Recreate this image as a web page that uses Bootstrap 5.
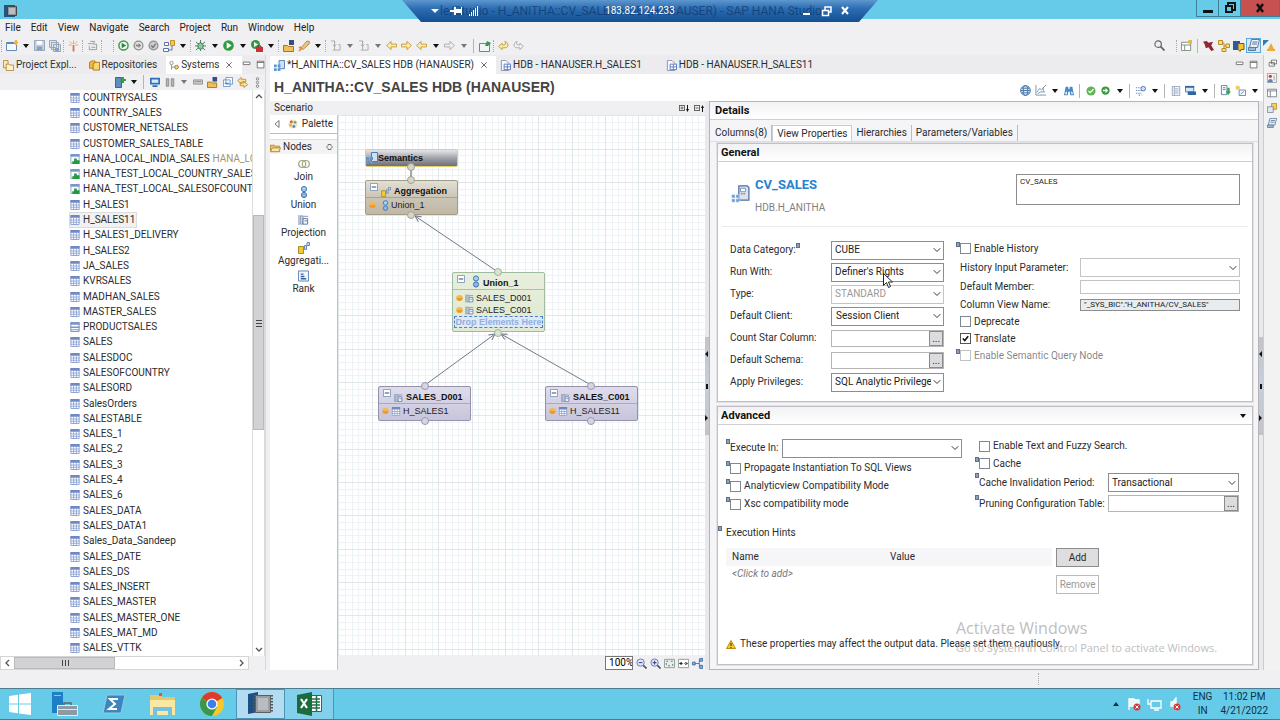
<!DOCTYPE html>
<html lang="en">
<head>
<meta charset="utf-8">
<meta name="viewport" content="width=device-width, initial-scale=1">
<title>SAP HANA Studio</title>
<link href="https://cdn.jsdelivr.net/npm/bootstrap@5.3.0/dist/css/bootstrap.min.css" rel="stylesheet">
<style>
  :root { --sky:#66cae9; --chrome:#f0eff1; --ink:#2b2b2e; --ui:Roboto,"Open Sans",sans-serif; }
  body { font:10px/14px var(--ui); color:var(--ink); background:var(--chrome); min-height:100vh; overflow-x:hidden; }
  svg { display:block; flex:none; }
  button { font:inherit; color:inherit; }
  .plain { border:0; background:none; padding:0; white-space:nowrap; }
  /* window title and remote bar */
  .titlebar { height:19px; background:var(--sky); }
  .remote { left:50%; top:0; width:476px; height:22px; margin-left:-238px; clip-path:polygon(0 0,100% 0,96% 100%,4% 100%); background:linear-gradient(#5d97cf,#2c6cb1 40%,#134f93); color:#fff; z-index:5; }
  .ghost { left:38px; color:#0a2f60; opacity:.6; font-size:12px; white-space:nowrap; }
  .remleft { left:25px; } .remright { right:28px; }
  .winbtn { height:17px; width:23px; border:1px solid #3f7f95; border-top:0; margin-left:-1px; }
  .winclose { width:40px; background:#c75050; }
  .menubar { height:18px; padding-left:5px; gap:10px; }
  .menubar a { color:#222; text-decoration:none; }
  .tools { height:18px; padding-bottom:1px; }
  .ti { width:15px; } .ti svg { margin:auto; }
  .cr { width:13px; } .cr::before { content:""; display:block; margin:auto; width:0; border:3px solid transparent; border-top:4px solid #111; border-bottom:0; }
  .cr.dim::before { border-top-color:#777; }
  .sp { width:4px; height:12px; } .sp::before { content:""; display:block; width:1px; height:12px; margin-left:1px; border-left:1px dotted #aaa; }
  .vl { width:1px; height:14px; background:#b5b5b5; margin:0 3px; }
  .boxed { height:15px; border:1px solid #5aa7dc; background:#d5e8f8; }
  /* left view */
  .side { width:266px; border-right:1px solid #d8d8dc; }
  .side .tools { height:16px; padding:0; }
  .viewtabs { height:19px; background:#ececee; padding-top:1px; }
  .viewtab { padding:0 9px 0 3px; gap:2px; color:#333; }
  .viewtab.on { background:#fff; }
  .tree { list-style:none; margin:0; padding:0 0 0 69px; background:#fff; min-width:0; overflow:hidden; }
  .tree li { flex:1 1 15px; display:flex; align-items:center; gap:3px; white-space:nowrap; line-height:14px; align-self:flex-start; padding:0 2px 0 1px; }
  .tree li.sel { background:#f1f1f1; outline:1px solid #dcdcdc; outline-offset:-1px; }
  .soft { color:#a39468; }
  .vscroll { width:13px; background:#fff; border-left:1px solid #dcdcdc; border-right:1px solid #dcdcdc; }
  .hscroll { height:14px; background:#fff; border:1px solid #d5d5d5; }
  .thumb { background:#d2d2d4; border:1px solid #b9b9bb; }
  /* editor */
  .etab { padding:0 8px 0 4px; gap:2px; }
  .etab.on { background:#fff; }
  .etab.gone { padding-right:20px; }
  .etitle { height:27px; background:#fff; padding:0 2px 2px 4px; font:bold 14px/24px "Liberation Sans",sans-serif; color:#444; }
  .scen { flex:436 1 0; min-width:0; }
  .det { flex:549 1 0; min-width:0; background:#f5f5f7; border:1px solid #b4b4b9; }
  .sash { width:4px; background:#e9e9ed; }
  .sashgrip { height:98px; background:linear-gradient(#c3c3c6,#c6cfdd,#c3c3c6); }
  .scenhead { height:14px; padding-left:4px; background:var(--chrome); }
  .palette { width:68px; background:#fff; border-right:1px solid #c4c4c8; }
  .palhead { height:19px; border-bottom:1px solid #bbb; }
  .palgroup { height:15px; margin-top:5px; background:#f3f3f4; border-top:1px solid #ddd; gap:2px; }
  .palitem { height:28px; line-height:13px; }
  .canvas { background:#fff; min-width:0; }
  .node { width:93px; border:1px solid; border-radius:2px; font:9px/12px "Liberation Sans",sans-serif; white-space:nowrap; color:#222; }
  .node b { color:#111; line-height:17px; }
  .nhead { height:17px; padding:2px 2px 0 4px; gap:3px; border-bottom:1px solid rgba(110,110,130,.4); }
  .nhead b { line-height:16px; }
  .nrow { height:12px; padding-left:3px; gap:2px; }
  .nsolo { margin:1px 0 3px; }
  .nlist { padding:2px 0 3px; }
  .tan { border-color:#a09d8b; background:linear-gradient(#e2dfd3,#cbc5b6 50%,#c0b7a5); }
  .green { border-color:#9fbba0; background:linear-gradient(#e8efdc,#dfe9d3); }
  .violet { border-color:#9391ab; background:linear-gradient(#dfdcec,#c8c5dc); }
  .dark { border:1px solid #e4cf6e; background:linear-gradient(#e6e6ea,#a3a3aa 50%,#6f6f77); height:18px; }
  .drop { border:1px dashed #4b83c4; background:#dfe8f5; color:#91afe2; height:12px; line-height:10px; margin:0 1px; text-align:center; font-weight:700; }
  .zoombar { gap:3px; height:14px; padding-right:2px; }
  .zoombox { width:28px; height:14px; border:1px solid #777; background:#fff; padding:0 0 0 3px; font:inherit; }
  /* details */
  .bar { height:18px; font-weight:700; font-size:11px; color:#111; padding:0 5px; line-height:17px; background:linear-gradient(#f2f2f4,#fff); border-bottom:1px solid #cfcfd3; }
  .box .bar { padding:0 3px; }
  .dtabs { margin-top:5px; height:17px; padding-left:1px; border-bottom:1px solid #ddd; }
  .dtabs button { padding:0 4px; border-right:1px solid #bcbcc0; height:16px; }
  .dtabs .on { background:#fff; border:1px solid #ccc; border-bottom:0; }
  .box { background:#fff; border:1px solid #c0c0c6; outline:1px solid #e2e2e6; margin:1px 5px 0 7px; }
  .ident { padding:8px 12px 11px; }
  .form-control, .form-select { font-size:10px; line-height:12px; min-height:0; border-radius:0; border:1px solid #8d8d90; color:#222; padding:2px 4px 2px 3px; box-shadow:none; }
  .form-select { height:19px; padding-right:12px; background-position:right 2px center; background-size:8px; background-color:#fff; }
  .form-select:disabled { background-color:#fff !important; border-color:#c4c4c6; color:#999; }
  .memo { width:224px; height:31px; resize:none; }
  .tinytext { font-size:8px; line-height:10px; }
  .pale { border-color:#c4c4c6; }
  .pick { height:17px; border:1px solid #b5b5b7; }
  .pick input { border:0; background:none; min-width:0; flex:1; padding:0; }
  .pick button { width:14px; height:15px; border:1px solid #8a8a8c; background:#dcdcde; line-height:9px; padding:0; }
  .w131 { flex:0 0 131px; width:131px; }
  .form-check-input { width:11px; height:11px; margin:0; border-radius:0 !important; border:1px solid #7d8a94; flex:none; }
  .form-check-input:checked { background-color:#fff; border-color:#555; background-image:url("data:image/svg+xml,%3csvg xmlns='http://www.w3.org/2000/svg' viewBox='0 0 10 10'%3e%3cpath d='M2 5l2.2 2.2L8 2.6' fill='none' stroke='%23111' stroke-width='1.8'/%3e%3c/svg%3e"); }
  .form-check-input:disabled { opacity:.5; }
  .ck { display:flex; align-items:center; gap:3px; white-space:nowrap; }
  .hint { width:4px; height:5px; background:#8ea1b8; border:1px solid #5d7088; align-self:flex-start; flex:none; }
  .ck .hint { margin-right:-3px; }
  .hint.out { margin-left:-4px; }
  .gform { display:grid; grid-template-columns:101px 113px; grid-auto-rows:22px; align-items:center; }
  .rform { display:grid; grid-template-columns:120px minmax(0,1fr); grid-template-rows:19px 19px 19px 17px 17px 17px 17px; align-items:center; }
  .rform .wide { grid-column:1/3; }
  .hd { font-size:13px; font-weight:700; color:#2a82cf; }
  .sub { font-size:10px; color:#808084; padding-top:9px; }
  .aleft { width:236px; display:grid; grid-template-rows:22px 18px 18px 18px; align-items:center; }
  .aright { padding-left:13px; display:grid; grid-template-rows:18px 17px 21px 21px; align-items:center; }
  .adv { padding:12px 13px 0 8px; }
  .hints { width:326px; background:#fff; table-layout:fixed; }
  .hints th { font-weight:400; background:#f6f6f8; padding:2px 6px; width:164px; }
  .hints th + th, .hints td + td { padding-left:0; width:auto; }
  .hints td { padding:1px 6px; font-style:italic; color:#777; }
  .btnx { width:43px; height:19px; border:1px solid #8c8c8e; background:#dedee0; padding:0; }
  .btnx:disabled { background:#fff; border-color:#bbb; color:#999; }
  .warn { padding:43px 0 0 8px; }
  .water { right:22px; bottom:6px; width:274px; color:#b4b4b6; opacity:.85; pointer-events:none; white-space:nowrap; line-height:20px; font-family:"Open Sans",sans-serif; }
  .water div { font-size:16px; } .water p { font-size:11px; margin:0; }
  .rail { width:17px; gap:5px; border-left:1px solid #ccc; background:#f2f2f3; }
  .statusbar { height:18px; }
  .taskbar { height:32px; background:var(--sky); border-top:1px solid #4f7c8c; border-bottom:1px solid #3e7e96; color:#10303c; }
  .task { width:49px; height:30px; border:0; background:none; padding:0; display:flex; align-items:center; justify-content:center; }
  .task.first { width:40px; }
  .task.on { background:#b3dcf3; border:1px solid #4a96b4; }
  .task.open { border-right:1px solid #4a96b4; background:#83d0ec; }
</style>
</head>
<body class="d-flex flex-column">
<svg width="0" height="0" class="position-absolute" aria-hidden="true">
  <symbol id="tbl" viewBox="0 0 10 11"><path fill="#fff" stroke="#8aa0cf" d="M.5.5h9v10h-9z"/><path fill="#6d87c4" d="M0 0h10v3H0z"/><path stroke="#7e95cc" d="M3.500 1v10M6.500 1v10M0 5.500h10M0 8h10" stroke-width=".8"/></symbol>
  <symbol id="vtbl" viewBox="0 0 10 11"><path fill="#fff" stroke="#8aa0cf" d="M.5.5h9v10h-9z"/><path fill="#7d95c9" d="M0 0h10v3H0z"/><path fill="#239a3f" d="M2 11V8h2V5h3v2h3v4z"/></symbol>
  <symbol id="row" viewBox="0 0 10 11"><path fill="#fff" stroke="#6d87c4" d="M.5.5h9v10h-9z"/><path fill="#7d95c9" d="M0 0h10v3H0zM0 5h10v1.500H0zM0 8h10v1H0z"/></symbol>
  <symbol id="cube" viewBox="0 0 12 12"><path fill="#cfe0f5" stroke="#4d7ab5" d="M5.500.5h6v9h-6z"/><path fill="#5f97cf" d="M0 5h3v3H0zM4 5h3v3H4zM0 9h3v3H0zM4 9h3v3H4z"/></symbol>
  <symbol id="doc" viewBox="0 0 12 12"><path fill="#f8fafe" stroke="#8492b0" d="M1.500.5h5l3 3v8h-8z"/><path fill="#fff" stroke="#5578c0" d="M4.500 4.500h7v6h-7zM4.500 7.500h7M8 4.500v6"/></symbol>
  <symbol id="new" viewBox="0 0 12 12"><path fill="#f4f8ff" stroke="#6a8bb5" d="M.5 2.500h10v8H.5z"/><path fill="#4b8fb8" d="M1 2h9v2H1z"/><path fill="#f0b53a" d="M9 0h2v5H9zM7.500 1.500h4.500v2H7.500z"/></symbol>
  <symbol id="save" viewBox="0 0 12 12"><path fill="#c8d2df" stroke="#8ca0b8" d="M.5.5h11v11H.5z"/><path fill="#fff" d="M3 1h6v4H3z"/><path fill="#8ca0b8" d="M3 7h6v4H3z"/></symbol>
  <symbol id="saves" viewBox="0 0 12 12"><path fill="#dfe4ea" stroke="#98a8ba" d="M.5.5h7v7h-7zM2.500 2.500h7v7h-7zM4.500 4.500h7v7h-7z"/><path fill="#8ca0b8" d="M6 8h4v3H6z"/></symbol>
  <symbol id="wand" viewBox="0 0 12 12"><path stroke="#d07b4a" stroke-width="2" d="M6 5v7"/><path stroke="#eaa34f" d="M6 0v4M2 1l3 3M10 1L7 4M1 5h3M8 5h3" fill="none"/></symbol>
  <symbol id="gen" viewBox="0 0 12 12"><path fill="#ececec" stroke="#999" d="M3.500 1.500h5l-2 3h4v6h-8v-4"/><path stroke="#999" d="M1 4h5M5 8h4"/></symbol>
  <symbol id="gcirc" viewBox="0 0 12 12"><circle cx="6" cy="6" r="5" fill="#eef8ee" stroke="#3f9a4d" stroke-width="1.600"/><path fill="#2c8a3c" d="M4 3l5 3-5 3z"/></symbol>
  <symbol id="scirc" viewBox="0 0 12 12"><circle cx="6" cy="6" r="4.800" fill="#e6e6e6" stroke="#8f8f8f" stroke-width="1.400"/><path fill="#8a8a8a" d="M3 5h3V3l3 3-3 3V7H3z"/></symbol>
  <symbol id="kcirc" viewBox="0 0 12 12"><circle cx="6" cy="6" r="4.800" fill="#ccc" stroke="#8f8f8f" stroke-width="1.400"/><path fill="none" stroke="#777" stroke-width="1.500" d="M3.500 6l2 2 3-4"/></symbol>
  <symbol id="grcheck" viewBox="0 0 12 12"><circle cx="6" cy="6" r="5.500" fill="#5fb455"/><path fill="none" stroke="#fff" stroke-width="1.600" d="M3 6l2 2 4-4"/></symbol>
  <symbol id="grarrow" viewBox="0 0 12 12"><circle cx="6" cy="6" r="5.500" fill="#37993e"/><path fill="#fff" d="M2.500 5H6V2.500L9.500 6 6 9.500V7H2.500z"/></symbol>
  <symbol id="flow" viewBox="0 0 12 12"><path fill="#fff" stroke="#5873b2" d="M1.500 2.500h4v3h-4zM.5 8.500h5v3h-5z"/><path fill="#f6cb55" stroke="#c29323" d="M7.500.5h4v5h-4z"/><path stroke="#5873b2" d="M6 10h3V6" fill="none"/></symbol>
  <symbol id="bug" viewBox="0 0 12 12"><path stroke="#3c7c58" d="M1 2l10 9M11 2L1 11M0 6.500h12M6 0v12"/><ellipse cx="6" cy="6.500" rx="3" ry="3.500" fill="#8dc6a0" stroke="#3c7c58"/></symbol>
  <symbol id="play" viewBox="0 0 12 12"><circle cx="6" cy="6" r="5.800" fill="#2f9c45"/><path fill="#fff" d="M4 2.500L9.500 6 4 9.500z"/></symbol>
  <symbol id="playr" viewBox="0 0 12 12"><circle cx="4.500" cy="4.500" r="4.500" fill="#2f9c45"/><path fill="#fff" d="M3 2l4 2.500L3 7z"/><path fill="#cf2e35" d="M5 7h7v5H5z"/><path stroke="#8f1b20" d="M7 7V6h3v1" fill="none"/></symbol>
  <symbol id="fold" viewBox="0 0 12 12"><path fill="#e9bd6a" stroke="#b98a38" d="M.5 3.500h4l1 1h5v6h-10z"/><path fill="#fbe6ae" stroke="#b98a38" d="M.5 10.500l2-4h9l-2 4z"/></symbol>
  <symbol id="foldp" viewBox="0 0 12 12"><path fill="#fbe9b5" stroke="#b98a38" d="M.5.5h5v8h-5z"/><path fill="#fff3cf" stroke="#b98a38" d="M3.500 4.500h3l1 1h4v6h-8z"/></symbol>
  <symbol id="repo" viewBox="0 0 12 12"><path fill="#f2bb3d" stroke="#a9781c" d="M.5 2.500l3-1.500h3v8h-6z"/><path fill="#fbd56d" stroke="#a9781c" d="M4.500 4l3-1.500h4V11h-7z"/></symbol>
  <symbol id="sys" viewBox="0 0 12 12"><path fill="none" stroke="#888" d="M3 5v6M3 8h4"/><circle cx="3" cy="3" r="2" fill="#fff" stroke="#888"/><circle cx="9" cy="8" r="2.200" fill="#f7d77a" stroke="#8a6b1e"/></symbol>
  <symbol id="foldb" viewBox="0 0 12 12"><path fill="#f0bf57" stroke="#a97518" d="M.5 5.500h4l1 1h5v5h-10z"/><path fill="#334f8a" d="M6 0h5v5H6z"/></symbol>
  <symbol id="rocket" viewBox="0 0 12 12"><path fill="#e9c88c" stroke="#b58a4c" d="M3 8l6-7 2.500.5L11 4 5 9.500z"/><path stroke="#e08a28" stroke-width="1.600" d="M1 11l3-3M1 8l2-1"/></symbol>
  <symbol id="gdown" viewBox="0 0 12 12"><path fill="none" stroke="#aaa" d="M1 1h4v10M9 5h2v6H3M5 1v6M3 5l2 2 2-2"/></symbol>
  <symbol id="aleft" viewBox="0 0 12 12"><path fill="#fbeebb" stroke="#c59b2a" d="M5.500 1.500v3h6v3h-6v3L.7 6z"/></symbol>
  <symbol id="aright" viewBox="0 0 12 12"><path fill="#fbeebb" stroke="#c59b2a" d="M6.500 1.500v3h-6v3h6v3L11.300 6z"/></symbol>
  <symbol id="agrey" viewBox="0 0 12 12"><path fill="#f3f3f3" stroke="#aaa" d="M6.500 1.500v3h-6v3h6v3L11.300 6z"/></symbol>
  <symbol id="undo" viewBox="0 0 12 12"><path fill="#fbeebb" stroke="#c59b2a" d="M4.500 3.500v2h2c2 0 2-2 1-4 4 1 5 7 0 7h-3v2L.7 7z"/></symbol>
  <symbol id="redo" viewBox="0 0 12 12"><path fill="#f3f3f3" stroke="#aaa" d="M7.500 3.500v2h-2c-2 0-2-2-1-4-4 1-5 7 0 7h3v2L11.300 7z"/></symbol>
  <symbol id="pin" viewBox="0 0 12 12"><path fill="#eef6f6" stroke="#5e8f95" d="M.5 3.500h10v8H.5z"/><path fill="#3b9156" d="M6 6l2-5 4 2-3 3z"/></symbol>
  <symbol id="lens" viewBox="0 0 12 12"><circle cx="4.500" cy="4.500" r="3.500" fill="none" stroke="#666" stroke-width="1.300"/><path stroke="#666" stroke-width="2" d="M7 7l4.500 4.500"/></symbol>
  <symbol id="persp" viewBox="0 0 12 12"><path fill="#fff" stroke="#7b8b7b" d="M.5 2.500h10v9H.5zM.5 5.500h10M4 5.500v6"/><path fill="#e3ba3e" d="M8 0h4v4H8z"/></symbol>
  <symbol id="redtool" viewBox="0 0 12 12"><path fill="#8f2730" d="M0 2l4-1 2 2 5-1-2 4 3 5-3 1-3-4-3 1-1-4z"/></symbol>
  <symbol id="tree" viewBox="0 0 12 12"><path fill="none" stroke="#b78a1d" d="M3 3h3v6h2M6 6h3"/><path fill="#ffe17b" stroke="#b78a1d" d="M.5.5h4v4h-4zM8 4h3.500v3.500H8zM4 8.500h4v3H4z"/></symbol>
  <symbol id="db" viewBox="0 0 12 12"><path fill="#2b5b9c" d="M0 1h7v9H0z"/><path fill="#f2c33b" stroke="#765a13" d="M5 3.500h6v6H8l-1 2-2-2z"/></symbol>
  <symbol id="scroll" viewBox="0 0 12 12"><path fill="#e8f0f8" stroke="#5b7d9c" d="M3.500.5h8l-2 8h-8zM4.500 3h5M4 5h5"/><path fill="#9fb8cf" stroke="#5b7d9c" d="M.5 8.500h7v3h-7z"/></symbol>
  <symbol id="debug2" viewBox="0 0 12 12"><path fill="#2b7fb5" d="M0 0h6L0 6z"/><path fill="#eba93b" d="M8 3l3 6h1v2H4V9h1z"/></symbol>
  <symbol id="person" viewBox="0 0 12 12"><path fill="#f3f3f6" stroke="#999" d="M.5.5h11v11H.5z"/><circle cx="4" cy="4" r="2" fill="#c4453c"/><path fill="#5b83b8" d="M1 11c0-5 6-5 6 0z"/><path stroke="#999" d="M8.500 3v6"/></symbol>
  <symbol id="panes" viewBox="0 0 12 12"><path fill="#fff" stroke="#6a7684" d="M.5 1.500h11v9H.5zM4 3.500v7M.5 3.500h11"/></symbol>
  <symbol id="notes" viewBox="0 0 12 12"><path fill="#f4cf5d" stroke="#b38d22" d="M5.500.5h6v7h-6z"/><path fill="#dfe6ee" stroke="#77879b" d="M.5 4.500h7v7h-7z"/></symbol>
  <symbol id="srv" viewBox="0 0 12 12"><path fill="#5b8fc2" stroke="#3b6795" d="M1.500 1.500h6v10h-6z"/><path fill="#3c9b51" d="M6 3h2V1h2v2h2v2h-2v2H8V5H6z"/></symbol>
  <symbol id="mon" viewBox="0 0 12 12"><path fill="#2f6fb5" d="M0 1h12v8H0zM3 10h6v2H3z"/><path fill="#d7e8f7" d="M2 3h8v4H2z"/></symbol>
  <symbol id="bars" viewBox="0 0 12 12"><path fill="#b5b5b5" stroke="#888" d="M1.500 1.500h3v9h-3zM7.500 1.500h3v9h-3z"/></symbol>
  <symbol id="kbd" viewBox="0 0 12 12"><path fill="#ccc" stroke="#888" d="M.5 3.500h11v5H.5zM2 5.500h8"/></symbol>
  <symbol id="coll" viewBox="0 0 12 12"><path fill="#fff" stroke="#5c8cc0" d="M3.500.5h8v8h-8zM.5 3.500h8v8h-8z"/><path stroke="#2d5d98" d="M2 7.500h5"/></symbol>
  <symbol id="rest" viewBox="0 0 12 12"><path fill="#fff" stroke="#555" d="M4.500 1.500h7v5h-7zM1.500 4.500h7v5h-7z"/></symbol>
  <symbol id="link" viewBox="0 0 12 12"><path fill="#fae3a0" stroke="#c5922a" d="M4.500.5v2h5v3h-5v2L.7 4zM7.500 4.500l4 4-4 3v-2h-4v-3h4z"/></symbol>
  <symbol id="dots" viewBox="0 0 12 12"><g fill="#fff" stroke="#777"><circle cx="6" cy="2" r="1.300"/><circle cx="6" cy="6" r="1.300"/><circle cx="6" cy="10" r="1.300"/></g></symbol>
  <symbol id="mini" viewBox="0 0 12 12"><path fill="#fff" stroke="#666" d="M1.500 2.500h8v3h-8z"/></symbol>
  <symbol id="maxi" viewBox="0 0 12 12"><path fill="#fff" stroke="#666" d="M1.500 1.500h8v8h-8zM1.500 3h8"/></symbol>
  <symbol id="xx" viewBox="0 0 12 12"><path stroke="#555" stroke-width="1.300" d="M2 2l8 8M10 2l-8 8"/></symbol>
  <symbol id="globe" viewBox="0 0 12 12"><g fill="none" stroke="#3f6fa2"><circle cx="6" cy="6" r="5.300" fill="#e2eefa"/><ellipse cx="6" cy="6" rx="2.500" ry="5.300"/><path d="M.7 6h10.600M1.500 3.500h9M1.500 8.500h9"/></g></symbol>
  <symbol id="chart" viewBox="0 0 12 12"><path fill="none" stroke="#7391ae" d="M1 0v11h11M2 8l3-4 2 1 5-5M3 9.500l3-2h5M9 3v4"/></symbol>
  <symbol id="bino" viewBox="0 0 12 12"><path fill="#4a86c8" d="M2 1h3l.5 3h1L7 1h3l2 10H7.500L7 7H5l-.5 4H0z"/><path fill="#fff" d="M2 7h1.500v3H1.500zM8.500 7H10l.5 3H9z"/></symbol>
  <symbol id="grid" viewBox="0 0 12 12"><path fill="none" stroke="#6b8bb8" stroke-width="1.300" stroke-dasharray="1.500 1" d="M1 3h9M1 6h9M1 9h6M4 11h3"/><circle cx="9" cy="4" r="2.500" fill="#cfe2f5" stroke="#51739e"/></symbol>
  <symbol id="sheet" viewBox="0 0 12 12"><path fill="#f4f7fc" stroke="#8a9bb8" d="M1.500.5h9v11h-9zM4 1v10M5 3.500h4M5 6h4M5 8.500h4"/></symbol>
  <symbol id="sqlw" viewBox="0 0 12 12"><path fill="#d6e7f8" stroke="#4377ad" d="M.5 1.500h9v6h-9z"/><path fill="#2f679f" d="M0 1h10v2H0zM3 7h9v4H3z"/></symbol>
  <symbol id="exp" viewBox="0 0 12 12"><path fill="#fff" stroke="#5480a8" d="M1.500.5h6v10h-6zM3 3h3M3 5h3"/><path fill="#39a24d" d="M6 7h2V3h2.500v4H12l-3 4z"/></symbol>
  <symbol id="keyw" viewBox="0 0 12 12"><circle cx="3" cy="3" r="2.500" fill="#f3cf62"/><path fill="#fff" stroke="#5d83b4" d="M4.500 5.500h7v6h-7z"/><path stroke="#5d83b4" d="M6 10l4-3"/></symbol>
  <symbol id="uni" viewBox="0 0 8 12"><circle cx="4" cy="3" r="2.600" fill="#a9cdef" stroke="#3d78b5"/><circle cx="4" cy="9" r="2.600" fill="#8ab6e4" stroke="#3d78b5"/></symbol>
  <symbol id="join" viewBox="0 0 12 12"><g fill="none" stroke="#a3a67e" stroke-width="1.200"><circle cx="4.200" cy="6" r="3.500"/><circle cx="7.800" cy="6" r="3.500"/></g></symbol>
  <symbol id="proj" viewBox="0 0 12 12"><path fill="#cfd7e4" stroke="#7d8fae" d="M2.500 1.500h3v9h-3z"/><path fill="#fff" stroke="#5270a0" d="M5.500 4.500h5v6h-5zM7 7h3"/><path stroke="#7d8fae" d="M1 .5v11M6 2h5"/></symbol>
  <symbol id="agg" viewBox="0 0 12 12"><path fill="#f3cb30" stroke="#a98a1c" d="M.5 4.500h5v7h-5z"/><path fill="#cfdcf0" stroke="#6b88b8" d="M6.500 3.500h2v4h-2zM9 .5h2.500v3H9z"/></symbol>
  <symbol id="rank" viewBox="0 0 12 12"><path fill="#f1f5fc" stroke="#5f7db0" d="M.5.5h11v11H.5z"/><path stroke="#3b5ea0" stroke-width="1.500" d="M3 4h3M3 6.500h4M3 9h6"/></symbol>
  <symbol id="pal" viewBox="0 0 12 12"><circle cx="6" cy="6" r="5.500" fill="#f0e7c8"/><circle cx="4" cy="3.500" r="1.700" fill="#d55"/><circle cx="8.500" cy="4" r="1.700" fill="#5b5"/><circle cx="3" cy="7.500" r="1.700" fill="#e9b52e"/><circle cx="7" cy="9" r="1.700" fill="#58c"/></symbol>
  <symbol id="minus" viewBox="0 0 9 9"><path fill="#fff" stroke="#7a97bb" d="M.5.5h8v8h-8z"/><path stroke="#235" d="M2 4.500h5"/></symbol>
  <symbol id="orb" viewBox="0 0 8 8"><path fill="#f09a22" d="M.3 3.500h7.400a3.700 4 0 0 1-7.400 0z"/><path fill="#f8b64c" d="M.3 3.600a3.700 3 0 0 1 7.400 0z"/></symbol>
  <symbol id="zin" viewBox="0 0 12 12"><circle cx="5" cy="5" r="4" fill="#dfe6fa" stroke="#6277b5"/><path stroke="#44508a" stroke-width="1.200" d="M3 5h4M5 3v4"/><path stroke="#555" stroke-width="1.800" d="M8 8l3.500 3.500"/></symbol>
  <symbol id="zout" viewBox="0 0 12 12"><circle cx="5" cy="5" r="4" fill="#dfe6fa" stroke="#6277b5"/><path stroke="#44508a" stroke-width="1.200" d="M3 5h4"/><path stroke="#555" stroke-width="1.800" d="M8 8l3.500 3.500"/></symbol>
  <symbol id="fit" viewBox="0 0 12 12"><path fill="#e7efe9" stroke="#8b9b90" d="M.5 1.500h11v9H.5z"/><path fill="none" stroke="#567" stroke-dasharray="2 3" d="M2.500 3.500h7v5h-7z"/></symbol>
  <symbol id="fitw" viewBox="0 0 12 12"><path fill="#fff" stroke="#8b9b90" d="M.5 1.500h11v9H.5z"/><path fill="#222" d="M1 6l3-2v4zM11 6L8 4v4zM3 5.500h2v1H3zM7 5.500h2v1H7z"/></symbol>
  <symbol id="lay" viewBox="0 0 12 12"><path stroke="#4b78b8" fill="none" d="M3 6h5V2h1M8 6v4h1"/><path fill="#8db3e2" stroke="#3f6cab" d="M.5 4.500h3v3h-3zM8.500.5h3v3h-3zM8.500 8h3v3.500h-3z"/></symbol>
</svg>

<header>
  <div class="titlebar d-flex align-items-start justify-content-between position-relative">
    <svg width="14" height="14" viewBox="0 0 14 14" class="mt-1 ms-1"><path fill="#22567f" d="M0 1h11v12H0z"/><path fill="#8d9298" stroke="#444" d="M3.500 2.500h9v9h-9z"/><path fill="#b9bdc1" d="M5 4h6v6H5z"/></svg>
    <div class="remote position-absolute d-flex align-items-center justify-content-center">
      <span class="ghost position-absolute">le/Studio - H_ANITHA::CV_SALES HDB (HANAUSER) - SAP HANA Studio</span>
      <svg class="position-absolute remleft" width="52" height="12" viewBox="0 0 52 12"><g fill="#fff"><path d="M4 4h8l-4 4zM23 5h5v2h-5zM27 2h2v8h-2zM29 4h5V2h1v8h-1V8h-5zM42 9h1v2h-1zM44 7h1v4h-1zM46 5h1v6h-1zM48 3h1v8h-1zM50 1h1v10h-1z"/></g></svg>
      <span class="position-relative">183.82.124.233</span>
      <svg class="position-absolute remright" width="48" height="12" viewBox="0 0 48 12"><path fill="#fff" d="M1 8h7v2H1z"/><path fill="none" stroke="#fff" stroke-width="1.500" d="M20.500 5.500h6v5h-6zM23 5V2h6v5h-2"/><path stroke="#fff" stroke-width="2" d="M40 2l6 7M46 2l-6 7"/></svg>
    </div>
    <div class="d-flex">
      <button class="plain winbtn d-flex justify-content-center align-items-center" aria-label="Minimize"><svg width="12" height="12"><path fill="#111" d="M1 8h10v3H1z"/></svg></button>
      <button class="plain winbtn d-flex justify-content-center align-items-center" aria-label="Restore"><svg width="12" height="12"><path fill="none" stroke="#111" stroke-width="2" d="M2 4h6v6H2zM4 3V1h7v7H9"/></svg></button>
      <button class="plain winbtn winclose d-flex justify-content-center align-items-center" aria-label="Close"><svg width="12" height="12"><path stroke="#111" stroke-width="2.500" d="M3 2l6 8M9 2l-6 8"/></svg></button>
    </div>
  </div>
  <nav class="menubar d-flex align-items-center"><a href="#">File</a><a href="#">Edit</a><a href="#">View</a><a href="#">Navigate</a><a href="#">Search</a><a href="#">Project</a><a href="#">Run</a><a href="#">Window</a><a href="#">Help</a></nav>
  <div class="tools d-flex align-items-center">
    <i class="sp"></i><span class="ti"><svg width="12" height="12"><use href="#new"/></svg></span><i class="cr"></i>
    <span class="ti"><svg width="11" height="11"><use href="#save"/></svg></span><span class="ti"><svg width="12" height="12"><use href="#saves"/></svg></span><i class="sp"></i>
    <span class="ti"><svg width="11" height="12"><use href="#wand"/></svg></span><i class="sp"></i>
    <span class="ti"><svg width="11" height="11"><use href="#gen"/></svg></span><i class="sp me-2"></i><i class="sp"></i>
    <span class="ti"><svg width="11" height="11"><use href="#gcirc"/></svg></span><span class="ti"><svg width="11" height="11"><use href="#scirc"/></svg></span><span class="ti"><svg width="11" height="11"><use href="#kcirc"/></svg></span>
    <span class="ti"><svg width="12" height="12"><use href="#flow"/></svg></span><i class="cr"></i><i class="sp"></i>
    <span class="ti"><svg width="11" height="11"><use href="#bug"/></svg></span><i class="cr"></i>
    <span class="ti"><svg width="11" height="11"><use href="#play"/></svg></span><i class="cr"></i>
    <span class="ti"><svg width="12" height="12"><use href="#playr"/></svg></span><i class="cr"></i><i class="sp"></i>
    <span class="ti"><svg width="12" height="12"><use href="#foldb"/></svg></span><span class="ti"><svg width="12" height="12"><use href="#rocket"/></svg></span><i class="cr"></i><i class="sp"></i>
    <span class="ti"><svg width="11" height="11"><use href="#gdown"/></svg></span><i class="cr dim"></i>
    <span class="ti"><svg width="11" height="11"><use href="#gdown"/></svg></span><i class="cr dim"></i>
    <span class="ti"><svg width="11" height="11"><use href="#aleft"/></svg></span><span class="ti"><svg width="11" height="11"><use href="#aright"/></svg></span>
    <span class="ti"><svg width="11" height="11"><use href="#aleft"/></svg></span><i class="cr"></i>
    <span class="ti"><svg width="11" height="11"><use href="#agrey"/></svg></span><i class="cr dim"></i><i class="vl"></i>
    <span class="ti"><svg width="12" height="12"><use href="#pin"/></svg></span><i class="sp"></i>
    <span class="ti"><svg width="11" height="11"><use href="#undo"/></svg></span><span class="ti"><svg width="11" height="11"><use href="#redo"/></svg></span>
    <span class="ti ms-auto me-2"><svg width="11" height="11"><use href="#lens"/></svg></span><i class="sp"></i>
    <span class="ti"><svg width="11" height="11"><use href="#persp"/></svg></span><i class="vl"></i>
    <span class="ti"><svg width="11" height="11"><use href="#redtool"/></svg></span><span class="ti"><svg width="12" height="12"><use href="#tree"/></svg></span><span class="ti"><svg width="12" height="12"><use href="#db"/></svg></span>
    <span class="ti boxed"><svg width="12" height="12"><use href="#scroll"/></svg></span><span class="ti me-1"><svg width="12" height="12"><use href="#debug2"/></svg></span>
  </div>
</header>

<main class="d-flex flex-grow-1">
  <aside class="side d-flex flex-column flex-shrink-0">
    <div class="viewtabs d-flex align-items-stretch">
      <button class="plain viewtab d-flex align-items-center"><svg width="11" height="11"><use href="#foldp"/></svg>Project Expl...</button>
      <button class="plain viewtab d-flex align-items-center"><svg width="11" height="11"><use href="#repo"/></svg>Repositories</button>
      <button class="plain viewtab on d-flex align-items-center"><svg width="10" height="11"><use href="#sys"/></svg>Systems <svg class="ms-1" width="8" height="8"><use href="#xx"/></svg></button>
      <span class="ms-auto d-flex gap-1 pt-1 pe-1"><svg width="10" height="10"><use href="#mini"/></svg><svg width="10" height="10"><use href="#maxi"/></svg></span>
    </div>
    <div class="tools d-flex align-items-center justify-content-end">
      <span class="ti"><svg width="12" height="12"><use href="#srv"/></svg></span><i class="cr"></i><i class="vl"></i><span class="ti"><svg width="10" height="10"><use href="#mon"/></svg></span>
      <span class="ti"><svg width="10" height="11"><use href="#bars"/></svg></span><i class="cr dim"></i><span class="ti"><svg width="10" height="10"><use href="#kbd"/></svg></span><span class="ti"><svg width="11" height="11"><use href="#foldb"/></svg></span>
      <span class="ti"><svg width="10" height="10"><use href="#coll"/></svg></span><span class="ti"><svg width="11" height="11"><use href="#link"/></svg></span><span class="ti"><svg width="11" height="11"><use href="#dots"/></svg></span>
    </div>
    <div class="d-flex flex-grow-1">
      <ul class="tree d-flex flex-column flex-grow-1">
        <li><svg width="10" height="10"><use href="#tbl"/></svg>COUNTRYSALES</li>
        <li><svg width="10" height="10"><use href="#tbl"/></svg>COUNTRY_SALES</li>
        <li><svg width="10" height="10"><use href="#tbl"/></svg>CUSTOMER_NETSALES</li>
        <li><svg width="10" height="10"><use href="#tbl"/></svg>CUSTOMER_SALES_TABLE</li>
        <li><svg width="10" height="10"><use href="#vtbl"/></svg>HANA_LOCAL_INDIA_SALES <span class="soft">HANA_LO</span></li>
        <li><svg width="10" height="10"><use href="#vtbl"/></svg>HANA_TEST_LOCAL_COUNTRY_SALES</li>
        <li><svg width="10" height="10"><use href="#vtbl"/></svg>HANA_TEST_LOCAL_SALESOFCOUNTR</li>
        <li><svg width="10" height="10"><use href="#tbl"/></svg>H_SALES1</li>
        <li class="sel"><svg width="10" height="10"><use href="#tbl"/></svg>H_SALES11</li>
        <li><svg width="10" height="10"><use href="#tbl"/></svg>H_SALES1_DELIVERY</li>
        <li><svg width="10" height="10"><use href="#tbl"/></svg>H_SALES2</li>
        <li><svg width="10" height="10"><use href="#tbl"/></svg>JA_SALES</li>
        <li><svg width="10" height="10"><use href="#tbl"/></svg>KVRSALES</li>
        <li><svg width="10" height="10"><use href="#tbl"/></svg>MADHAN_SALES</li>
        <li><svg width="10" height="10"><use href="#tbl"/></svg>MASTER_SALES</li>
        <li><svg width="10" height="10"><use href="#row"/></svg>PRODUCTSALES</li>
        <li><svg width="10" height="10"><use href="#tbl"/></svg>SALES</li>
        <li><svg width="10" height="10"><use href="#tbl"/></svg>SALESDOC</li>
        <li><svg width="10" height="10"><use href="#tbl"/></svg>SALESOFCOUNTRY</li>
        <li><svg width="10" height="10"><use href="#tbl"/></svg>SALESORD</li>
        <li><svg width="10" height="10"><use href="#tbl"/></svg>SalesOrders</li>
        <li><svg width="10" height="10"><use href="#tbl"/></svg>SALESTABLE</li>
        <li><svg width="10" height="10"><use href="#tbl"/></svg>SALES_1</li>
        <li><svg width="10" height="10"><use href="#tbl"/></svg>SALES_2</li>
        <li><svg width="10" height="10"><use href="#tbl"/></svg>SALES_3</li>
        <li><svg width="10" height="10"><use href="#tbl"/></svg>SALES_4</li>
        <li><svg width="10" height="10"><use href="#tbl"/></svg>SALES_6</li>
        <li><svg width="10" height="10"><use href="#tbl"/></svg>SALES_DATA</li>
        <li><svg width="10" height="10"><use href="#tbl"/></svg>SALES_DATA1</li>
        <li><svg width="10" height="10"><use href="#tbl"/></svg>Sales_Data_Sandeep</li>
        <li><svg width="10" height="10"><use href="#tbl"/></svg>SALES_DATE</li>
        <li><svg width="10" height="10"><use href="#tbl"/></svg>SALES_DS</li>
        <li><svg width="10" height="10"><use href="#tbl"/></svg>SALES_INSERT</li>
        <li><svg width="10" height="10"><use href="#tbl"/></svg>SALES_MASTER</li>
        <li><svg width="10" height="10"><use href="#tbl"/></svg>SALES_MASTER_ONE</li>
        <li><svg width="10" height="10"><use href="#tbl"/></svg>SALES_MAT_MD</li>
        <li><svg width="10" height="10"><use href="#tbl"/></svg>SALES_VTTK</li>
      </ul>
      <div class="vscroll d-flex flex-column align-items-stretch">
        <svg class="mx-auto" width="8" height="13" viewBox="0 0 8 13"><path fill="none" stroke="#555" stroke-width="1.300" d="M1 8l3-3 3 3"/></svg>
        <div style="flex:112"></div>
        <div class="thumb d-flex align-items-center justify-content-center" style="flex:214"><svg width="6" height="8"><path stroke="#444" d="M0 1.500h6M0 4.500h6M0 7.500h6"/></svg></div>
        <div style="flex:213"></div>
        <svg class="mx-auto" width="8" height="13" viewBox="0 0 8 13"><path fill="none" stroke="#555" stroke-width="1.300" d="M1 5l3 3 3-3"/></svg>
      </div>
    </div>
    <div class="hscroll d-flex align-items-stretch me-3">
      <svg width="13" height="12" viewBox="0 0 13 12"><path fill="none" stroke="#555" stroke-width="1.300" d="M8 3L5 6l3 3"/></svg>
      <div class="thumb d-flex align-items-center justify-content-center" style="flex:101"><svg width="8" height="6"><path stroke="#444" d="M1.500 0v6M4.500 0v6M7.500 0v6"/></svg></div>
      <div style="flex:122"></div>
      <svg width="13" height="12" viewBox="0 0 13 12"><path fill="none" stroke="#555" stroke-width="1.300" d="M5 3l3 3-3 3"/></svg>
    </div>
  </aside>

  <section class="d-flex flex-column flex-grow-1 ms-1" style="min-width:0">
    <div class="viewtabs d-flex align-items-stretch">
      <button class="plain etab on d-flex align-items-center"><svg width="11" height="11"><use href="#cube"/></svg>*H_ANITHA::CV_SALES HDB (HANAUSER) <svg class="ms-1" width="8" height="8"><use href="#xx"/></svg></button>
      <button class="plain etab gone d-flex align-items-center"><svg width="11" height="11"><use href="#doc"/></svg>HDB - HANAUSER.H_SALES1</button>
      <button class="plain etab d-flex align-items-center"><svg width="11" height="11"><use href="#doc"/></svg>HDB - HANAUSER.H_SALES11</button>
      <span class="ms-auto d-flex gap-1 pt-1 pe-1"><svg width="10" height="10"><use href="#mini"/></svg><svg width="10" height="10"><use href="#maxi"/></svg></span>
    </div>
    <div class="etitle d-flex align-items-center justify-content-between">
      <span>H_ANITHA::CV_SALES HDB (HANAUSER)</span>
      <span class="d-flex align-items-center pt-2">
        <span class="ti"><svg width="11" height="11"><use href="#globe"/></svg></span><span class="ti"><svg width="11" height="11"><use href="#chart"/></svg></span><i class="cr"></i><span class="ti"><svg width="10" height="10"><use href="#bino"/></svg></span><i class="vl"></i>
        <span class="ti"><svg width="10" height="10"><use href="#grcheck"/></svg></span><span class="ti"><svg width="9" height="9"><use href="#grarrow"/></svg></span><i class="cr"></i><i class="vl"></i>
        <span class="ti"><svg width="11" height="11"><use href="#grid"/></svg></span><i class="cr"></i><i class="vl"></i>
        <span class="ti"><svg width="10" height="10"><use href="#sheet"/></svg></span><span class="ti"><svg width="11" height="11"><use href="#sqlw"/></svg></span><i class="cr"></i><i class="vl"></i>
        <span class="ti"><svg width="11" height="11"><use href="#exp"/></svg></span><span class="ti"><svg width="11" height="11"><use href="#keyw"/></svg></span><i class="cr"></i>
      </span>
    </div>
    <div class="d-flex flex-grow-1">
      <div class="scen d-flex flex-column">
        <div class="scenhead d-flex align-items-center justify-content-between"><span>Scenario</span>
          <svg width="26" height="9" viewBox="0 0 26 9"><g fill="none" stroke="#666"><rect x=".5" y="1.500" width="5" height="5"/><path d="M1.500 4h3M3 2.500v3M16.500 4h3"/><rect x="15.500" y="1.500" width="5" height="5"/></g><path fill="#111" d="M8 1h1v4h1L8.500 8 7 5h1zM23 8h1V4h1l-1.500-3L22 4h1z"/></svg></div>
        <div class="d-flex flex-grow-1">
          <div class="palette flex-shrink-0">
            <div class="palhead d-flex align-items-center justify-content-end gap-2 pe-1"><svg width="6" height="8"><path fill="#fff" stroke="#777" d="M5 .5v7L1 4z"/></svg><span class="d-flex align-items-center gap-1"><svg width="10" height="10"><use href="#pal"/></svg>Palette</span></div>
            <div class="palgroup d-flex align-items-center"><svg width="11" height="11"><use href="#fold"/></svg>Nodes<svg class="ms-auto me-1" width="7" height="6"><path fill="none" stroke="#777" d="M2 .5h3v1l1.500 1.500L5 4.500v1H2v-1L.5 3 2 1.500z"/></svg></div>
            <div class="text-center pt-1">
              <div class="palitem"><svg class="mx-auto" width="12" height="12"><use href="#join"/></svg>Join</div>
              <div class="palitem"><svg class="mx-auto" width="8" height="12"><use href="#uni"/></svg>Union</div>
              <div class="palitem"><svg class="mx-auto" width="11" height="12"><use href="#proj"/></svg>Projection</div>
              <div class="palitem"><svg class="mx-auto" width="12" height="12"><use href="#agg"/></svg>Aggregati...</div>
              <div class="palitem"><svg class="mx-auto" width="11" height="12"><use href="#rank"/></svg>Rank</div>
            </div>
          </div>
          <div class="flex-grow-1 d-flex flex-column" style="min-width:0">
            <div class="canvas position-relative flex-grow-1 overflow-hidden">
              <svg class="position-absolute w-100 h-100" aria-hidden="true">
                <defs>
                  <pattern id="mesh" width="100" height="100" patternUnits="userSpaceOnUse">
                    <path stroke="#edf3f5" d="M7.500 0v100M14.500 0v100M20.500 0v100M27.500 0v100M40.500 0v100M47.500 0v100M54.500 0v100M60.500 0v100M74.500 0v100M80.500 0v100M87.500 0v100M94.500 0v100M0 7.500h100M0 14.500h100M0 20.500h100M0 27.500h100M0 40.500h100M0 47.500h100M0 54.500h100M0 60.500h100M0 74.500h100M0 80.500h100M0 87.500h100M0 94.500h100"/>
                    <path stroke="#dfe7ea" d="M.5 0v100M34.500 0v100M67.500 0v100M0 .5h100M0 34.500h100M0 67.500h100"/>
                  </pattern>
                  <marker id="tip" viewBox="0 0 8 8" refX="7" refY="4" markerWidth="8" markerHeight="8" orient="auto"><path fill="none" stroke="#77778c" d="M1 1l6 3-6 3"/></marker>
                </defs>
                <rect width="100%" height="100%" fill="url(#mesh)"/>
                <g stroke="#77778c" fill="none"><path d="M73 55v8" stroke="#555"/><path marker-end="url(#tip)" d="M160 157L77 101"/><path marker-end="url(#tip)" d="M87 270L157 219"/><path marker-end="url(#tip)" d="M253 270L163 219"/></g>
              </svg>
              <div class="node dark position-absolute d-flex align-items-center ps-0" style="left:27px;top:34px"><svg width="12" height="12"><use href="#cube"/></svg><b>Semantics</b></div>
              <div class="node tan position-absolute" style="left:27px;top:65px">
                <div class="nhead d-flex"><svg width="8" height="8"><use href="#minus"/></svg><svg class="mt-1" width="10" height="10"><use href="#agg"/></svg><b>Aggregation</b></div>
                <div class="nrow nsolo d-flex align-items-center"><svg width="7" height="8"><use href="#orb"/></svg><svg class="ms-1" width="7" height="11"><use href="#uni"/></svg>Union_1</div>
              </div>
              <div class="node green position-absolute" style="left:114px;top:157px">
                <div class="nhead d-flex"><svg width="8" height="8"><use href="#minus"/></svg><svg class="ms-1" width="8" height="13"><use href="#uni"/></svg><b>Union_1</b></div>
                <div class="nlist">
                  <div class="nrow d-flex align-items-center"><svg width="7" height="8"><use href="#orb"/></svg><svg width="9" height="9"><use href="#proj"/></svg>SALES_D001</div>
                  <div class="nrow d-flex align-items-center"><svg width="7" height="8"><use href="#orb"/></svg><svg width="9" height="9"><use href="#proj"/></svg>SALES_C001</div>
                  <div class="drop">Drop Elements Here</div>
                </div>
              </div>
              <div class="node violet position-absolute" style="left:40px;top:271px">
                <div class="nhead d-flex"><svg width="8" height="8"><use href="#minus"/></svg><svg class="mt-1" width="9" height="10"><use href="#proj"/></svg><b>SALES_D001</b></div>
                <div class="nrow nsolo d-flex align-items-center"><svg width="7" height="8"><use href="#orb"/></svg><svg width="10" height="9"><use href="#tbl"/></svg>H_SALES1</div>
              </div>
              <div class="node violet position-absolute" style="left:207px;top:271px">
                <div class="nhead d-flex"><svg width="8" height="8"><use href="#minus"/></svg><svg class="mt-1" width="9" height="10"><use href="#proj"/></svg><b>SALES_C001</b></div>
                <div class="nrow nsolo d-flex align-items-center"><svg width="7" height="8"><use href="#orb"/></svg><svg width="10" height="9"><use href="#tbl"/></svg>H_SALES11</div>
              </div>
              <svg class="position-absolute w-100 h-100" aria-hidden="true"><g fill="#d5d5c6" stroke="#a3a394"><circle cx="73" cy="52" r="3.500"/><circle cx="73" cy="65" r="3.500"/><circle cx="73" cy="100" r="3.500"/></g><g fill="#d9e3cf" stroke="#a0b49c"><circle cx="160" cy="157" r="3.500"/><circle cx="160" cy="218" r="3.500"/></g><g fill="#d6d4e3" stroke="#9997ad"><circle cx="87" cy="271" r="3.500"/><circle cx="87" cy="306" r="3.500"/><circle cx="253" cy="271" r="3.500"/><circle cx="253" cy="306" r="3.500"/></g></svg>
            </div>
            <div class="zoombar d-flex align-items-center justify-content-end"><input class="zoombox" value="100%" aria-label="Zoom"><svg width="11" height="11"><use href="#zout"/></svg><svg width="11" height="11"><use href="#zin"/></svg><svg width="11" height="11"><use href="#fit"/></svg><svg width="11" height="11"><use href="#fitw"/></svg><svg width="11" height="11"><use href="#lay"/></svg></div>
          </div>
        </div>
      </div>
      <div class="sash d-flex flex-column justify-content-center"><div class="sashgrip d-flex flex-column justify-content-around"><svg width="4" height="70" viewBox="0 0 4 70"><path fill="#111" d="M0 3l3-3v6zM1 33h2v5H1zM0 64l3 3-3 3z"/></svg></div></div>

      <div class="det d-flex flex-column pb-1">
        <div class="bar">Details</div>
        <div class="dtabs d-flex"><button class="plain">Columns(8)</button><button class="plain on">View Properties</button><button class="plain">Hierarchies</button><button class="plain">Parameters/Variables</button></div>
        <div class="box">
          <div class="bar">General</div>
          <div class="ident d-flex">
            <svg class="mt-2 pt-1" width="21" height="25" viewBox="0 -4 21 25"><path fill="#d8e4f4" stroke="#50719f" stroke-width="1.500" d="M8.500.5h10l2 2v15h-12z"/><path fill="#fff" stroke="#6f8cb8" d="M10.500 3.500h6v4h-6z"/><path fill="#d9744c" d="M11 9h2v2h-2zM14 9h2v2h-2z"/><path fill="#6a9fd4" stroke="#fff" stroke-width=".5" d="M0 11h4v4H0zM5 11h4v4H5zM0 16h4v4H0zM5 16h4v4H5z"/></svg>
            <div class="ms-1 pt-2"><div class="hd">CV_SALES</div><div class="sub">HDB.H_ANITHA</div></div>
            <textarea class="form-control memo tinytext ms-auto mt-1" aria-label="Description">CV_SALES</textarea>
          </div>
          <div class="mx-1 border-top border-secondary-subtle"></div>
          <div class="d-flex pt-2 pb-2 px-2">
            <div class="gform mt-1 ms-1">
              <label for="f1" class="d-flex">Data Category:<i class="hint"></i></label><select id="f1" class="form-select"><option>CUBE</option></select>
              <label for="f2">Run With:</label><select id="f2" class="form-select"><option>Definer's Rights</option></select>
              <label for="f3">Type:</label><select id="f3" class="form-select" disabled><option>STANDARD</option></select>
              <label for="f4">Default Client:</label><select id="f4" class="form-select ps-1"><option>Session Client</option></select>
              <label for="f5">Count Star Column:</label><div class="pick d-flex"><input id="f5"><button>...</button></div>
              <label for="f6">Default Schema:</label><div class="pick d-flex"><input id="f6"><button>...</button></div>
              <label for="f7">Apply Privileges:</label><select id="f7" class="form-select"><option>SQL Analytic Privileges</option></select>
            </div>
            <div class="rform flex-grow-1 ms-3 me-1 mt-1">
              <label class="ck wide"><i class="hint out"></i><input class="form-check-input" type="checkbox">Enable History</label>
              <label for="g1">History Input Parameter:</label><select id="g1" class="form-select" disabled><option></option></select>
              <label for="g2">Default Member:</label><input id="g2" class="form-control pale py-0">
              <label for="g3">Column View Name:</label><input id="g3" class="form-control py-0 tinytext bg-body-secondary" readonly value="&quot;_SYS_BIC&quot;.&quot;H_ANITHA/CV_SALES&quot;">
              <label class="ck wide"><input class="form-check-input" type="checkbox">Deprecate</label>
              <label class="ck wide"><input class="form-check-input" type="checkbox" checked>Translate</label>
              <label class="ck wide text-black-50"><i class="hint out"></i><input class="form-check-input" type="checkbox" disabled>Enable Semantic Query Node</label>
            </div>
          </div>
        </div>
        <div class="box flex-grow-1 position-relative mt-1">
          <div class="bar d-flex align-items-center justify-content-between">Advanced<i class="cr"></i></div>
          <div class="adv d-flex">
            <div class="flex-shrink-0 aleft">
              <div class="d-flex align-items-center"><i class="hint"></i><label for="e1" class="text-nowrap me-1">Execute In:</label><select id="e1" class="form-select"><option></option></select></div>
              <label class="ck"><i class="hint"></i><input class="form-check-input" type="checkbox">Propagate Instantiation To SQL Views</label>
              <label class="ck"><i class="hint"></i><input class="form-check-input" type="checkbox">Analyticview Compatibility Mode</label>
              <label class="ck"><i class="hint"></i><input class="form-check-input" type="checkbox">Xsc compatibility mode</label>
            </div>
            <div class="flex-grow-1 aright">
              <label class="ck ms-1"><input class="form-check-input" type="checkbox">Enable Text and Fuzzy Search.</label>
              <label class="ck"><i class="hint"></i><input class="form-check-input" type="checkbox">Cache</label>
              <div class="d-flex align-items-center"><i class="hint"></i><label for="h1" class="text-nowrap">Cache Invalidation Period:</label><select id="h1" class="form-select w131 ms-auto"><option>Transactional</option></select></div>
              <div class="d-flex align-items-center"><i class="hint"></i><label for="h2" class="text-nowrap">Pruning Configuration Table:</label><div class="pick w131 d-flex ms-auto"><input id="h2"><button>...</button></div></div>
            </div>
          </div>
          <div class="d-flex pt-2 mt-1 gap-1"><i class="hint"></i><span>Execution Hints</span></div>
          <div class="d-flex ps-2 pt-2">
            <table class="hints align-self-start"><tr><th>Name</th><th>Value</th></tr><tr><td>&lt;Click to add&gt;</td><td></td></tr></table>
            <div class="ms-1"><button class="btnx d-block mb-2">Add</button><button class="btnx d-block" disabled>Remove</button></div>
          </div>
          <div class="warn d-flex align-items-center gap-1"><svg width="10" height="9"><path fill="#f6c930" stroke="#b98d12" d="M5 .5L9.500 8.500H.5z"/><path stroke="#222" d="M5 3v3M5 7v1"/></svg>These properties may affect the output data. Please set them cautiously.</div>
          <div class="water position-absolute"><div>Activate Windows</div><p>Go to System in Control Panel to activate Windows.</p></div>
        </div>
        <svg class="position-fixed" style="left:883px;top:273px" width="11" height="16" viewBox="0 0 11 16"><path fill="#fff" stroke="#222" d="M.5.5v12l3-3 2 5 2-1-2-4.500h4z"/></svg>
      </div>
      <div class="sash d-flex flex-column justify-content-center"><div class="sashgrip d-flex flex-column justify-content-around"><svg width="4" height="70" viewBox="0 0 4 70"><path fill="#111" d="M0 3l3-3v6zM1 33h2v5H1zM0 64l3 3-3 3z"/></svg></div></div>
    </div>
  </section>
  <aside class="rail d-flex flex-column align-items-center pt-1 flex-shrink-0">
    <svg width="9" height="9"><use href="#rest"/></svg><svg width="10" height="10"><use href="#person"/></svg><svg width="10" height="10"><use href="#panes"/></svg><svg width="10" height="10"><use href="#notes"/></svg><svg width="10" height="10"><use href="#scroll"/></svg>
  </aside>
</main>
<div class="statusbar d-flex align-items-center"><i class="sp" style="margin-left:81%"></i></div>
<footer class="taskbar d-flex align-items-center">
  <button class="task first" aria-label="Start"><svg width="22" height="22" viewBox="0 0 22 22"><path fill="#fff" d="M0 3l9-1.300V10.500H0zM10 1.500L22 0v10.500H10zM0 11.500h9v8.800L0 19zM10 11.500h12V22l-12-1.500z"/></svg></button>
  <button class="task" aria-label="Server Manager"><svg width="26" height="26" viewBox="0 0 26 26"><path fill="#1f7fc4" d="M0 1h11v21H0z"/><path stroke="#8cc8ee" d="M2 4.500h7"/><path fill="#8d99a3" stroke="#e7eef2" d="M5.500 14.500h20v10h-20z"/><path fill="none" stroke="#5a6670" stroke-width="1.500" d="M12 14v-2h7v2"/><path stroke="#dfe5ea" d="M6 18.500h19"/></svg></button>
  <button class="task" aria-label="PowerShell"><svg width="24" height="20" viewBox="0 0 24 20"><path fill="#3b86c0" stroke="#9cc8e6" d="M5 1h18l-4 18H1z"/><path fill="none" stroke="#fff" stroke-width="2" d="M16 5H8l5 5-6 5h8"/></svg></button>
  <button class="task" aria-label="Explorer"><svg width="27" height="25" viewBox="0 0 27 25"><path fill="#e9c767" d="M1 3h10l2 2h13v17H1z"/><path fill="#f9e7a4" d="M1 8h25v15H1z"/><path fill="#d8564a" d="M10 1h3v3h-3z"/><path fill="none" stroke="#79bfe0" stroke-width="4" d="M6 24v-7h15v7"/></svg></button>
  <button class="task" aria-label="Chrome"><svg width="24" height="24" viewBox="0 0 24 24"><circle cx="12" cy="12" r="12" fill="#f6c828"/><path fill="#dc3b30" d="M12 12L1.600 6A12 12 0 0 1 22.400 6z"/><path fill="#38994a" d="M12 12L1.600 6A12 12 0 0 0 12 24l5-9z"/><circle cx="12" cy="12" r="5.600" fill="#fff"/><circle cx="12" cy="12" r="4.300" fill="#3b7ded"/></svg></button>
  <button class="task on" aria-label="SAP HANA Studio"><svg width="25" height="24" viewBox="0 0 25 24"><path fill="#1d4f83" d="M0 2L10 0v20L0 22z"/><path fill="none" stroke="#555" stroke-width="20" stroke-dasharray="1.500 1.500" d="M15 3v18"/><path fill="#9b9ea1" stroke="#5c5f63" d="M7.500 3.500h15v17h-15z"/><path fill="#b9bcc0" d="M10 6h10v12H10z"/></svg></button>
  <button class="task open" aria-label="Excel"><svg width="25" height="24" viewBox="0 0 25 24"><path fill="#fff" stroke="#1f7244" d="M13.500 3.500h11v16h-11z"/><path stroke="#1f7244" stroke-width="1.500" d="M15 7h8M15 10h8M15 13h8M15 16h8M19.500 4v15"/><path fill="#1c6b3f" d="M0 3l15-3v24L0 21z"/><path stroke="#fff" stroke-width="2.200" d="M4 7l6 9M10 7l-6 9"/></svg></button>
  <div class="ms-auto d-flex align-items-center gap-2 pe-2 me-1 text-center">
    <svg width="6" height="4"><path fill="#134" d="M0 4l3-4 3 4z"/></svg>
    <svg width="54" height="14" viewBox="0 0 54 14"><g fill="none" stroke="#fff" stroke-width="1.300"><path fill="#e9f4f8" d="M2 13V2h5l1 1h4v6H2M44 5h2l3-4v12l-3-4h-2z"/><path d="M24 4h10v7H24zM27 13h5M21 2v5h3"/></g><g fill="#d23b3b"><circle cx="10" cy="10" r="3.500"/><circle cx="50" cy="10" r="3.500"/></g><path stroke="#fff" d="M8.500 8.500l3 3m0-3l-3 3M48.500 8.500l3 3m0-3l-3 3"/></svg>
    <div class="ms-1">ENG<br>IN</div><div>11:02 PM<br>4/21/2022</div>
  </div>
</footer>
<script src="https://cdn.jsdelivr.net/npm/bootstrap@5.3.0/dist/js/bootstrap.bundle.min.js"></script>
</body>
</html>
